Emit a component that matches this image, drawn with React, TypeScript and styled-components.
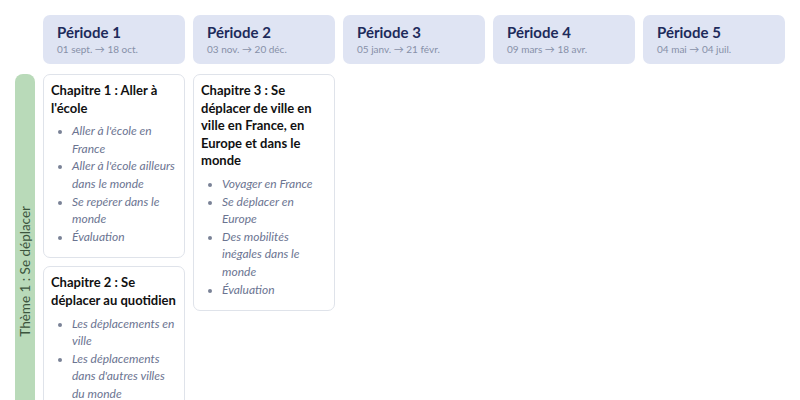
import React from "react";
import styled, { createGlobalStyle } from "styled-components";

const GlobalStyle = createGlobalStyle`
  body {
    margin: 0;
    background: #ffffff;
    font-family: Lato, "Noto Sans", sans-serif;
  }
`;

const Board = styled.div`
  display: grid;
  grid-template-columns: 20px repeat(5, 142px);
  column-gap: 8px;
  row-gap: 10px;
  padding: 15px;
  align-items: start;
`;

const Corner = styled.div``;

const PeriodCard = styled.div`
  background: #dfe4f3;
  border-radius: 7px;
  padding: 8px 14px 8px;
`;

const PeriodTitle = styled.div`
  font-size: 15px;
  font-weight: 700;
  line-height: 19px;
  color: #1e2b5b;
`;

const PeriodDates = styled.div`
  font-size: 10px;
  line-height: 14px;
  color: #8790a8;
`;

const ThemeBar = styled.div`
  align-self: stretch;
  background: #b9dab9;
  border-radius: 8px 8px 0 0;
  display: flex;
  align-items: center;
  justify-content: center;
`;

const ThemeLabel = styled.span`
  writing-mode: vertical-rl;
  transform: rotate(180deg);
  font-size: 13.5px;
  color: #3c553d;
  white-space: nowrap;
`;

const Column = styled.div`
  display: flex;
  flex-direction: column;
  gap: 8px;
`;

const ChapterCard = styled.div`
  border: 1px solid #dfe3ea;
  border-radius: 7px;
  padding: 7px 7px 12px;
  background: #ffffff;
`;

const ChapterTitle = styled.div`
  font-size: 13px;
  font-weight: 700;
  line-height: 17.6px;
  color: #111111;
  margin-bottom: 5px;
`;

const Lessons = styled.ul`
  margin: 0;
  padding-left: 21px;
`;

const Lesson = styled.li`
  font-size: 12px;
  font-style: italic;
  line-height: 17.6px;
  color: #6b7491;

  &::marker {
    color: #7a8297;
    font-size: 11px;
  }
`;

interface Chapter {
  title: string;
  lessons: string[];
}

const periods = [
  { name: "Période 1", dates: "01 sept. → 18 oct." },
  { name: "Période 2", dates: "03 nov. → 20 déc." },
  { name: "Période 3", dates: "05 janv. → 21 févr." },
  { name: "Période 4", dates: "09 mars → 18 avr." },
  { name: "Période 5", dates: "04 mai → 04 juil." },
];

const columns: Chapter[][] = [
  [
    {
      title: "Chapitre 1 : Aller à l'école",
      lessons: [
        "Aller à l'école en France",
        "Aller à l'école ailleurs dans le monde",
        "Se repérer dans le monde",
        "Évaluation",
      ],
    },
    {
      title: "Chapitre 2 : Se déplacer au quotidien",
      lessons: [
        "Les déplacements en ville",
        "Les déplacements dans d'autres villes du monde",
        "Des déplacements plus durables",
        "Évaluation",
      ],
    },
  ],
  [
    {
      title: "Chapitre 3 : Se déplacer de ville en ville en France, en Europe et dans le monde",
      lessons: [
        "Voyager en France",
        "Se déplacer en Europe",
        "Des mobilités inégales dans le monde",
        "Évaluation",
      ],
    },
  ],
  [],
  [],
  [],
];

const App = () => (
  <>
    <GlobalStyle />
    <Board>
      <Corner />
      {periods.map((p) => (
        <PeriodCard key={p.name}>
          <PeriodTitle>{p.name}</PeriodTitle>
          <PeriodDates>{p.dates}</PeriodDates>
        </PeriodCard>
      ))}
      <ThemeBar>
        <ThemeLabel>Thème 1 : Se déplacer</ThemeLabel>
      </ThemeBar>
      {columns.map((chapters, i) => (
        <Column key={i}>
          {chapters.map((c) => (
            <ChapterCard key={c.title}>
              <ChapterTitle>{c.title}</ChapterTitle>
              <Lessons>
                {c.lessons.map((l) => (
                  <Lesson key={l}>{l}</Lesson>
                ))}
              </Lessons>
            </ChapterCard>
          ))}
        </Column>
      ))}
    </Board>
  </>
);

export default App;
